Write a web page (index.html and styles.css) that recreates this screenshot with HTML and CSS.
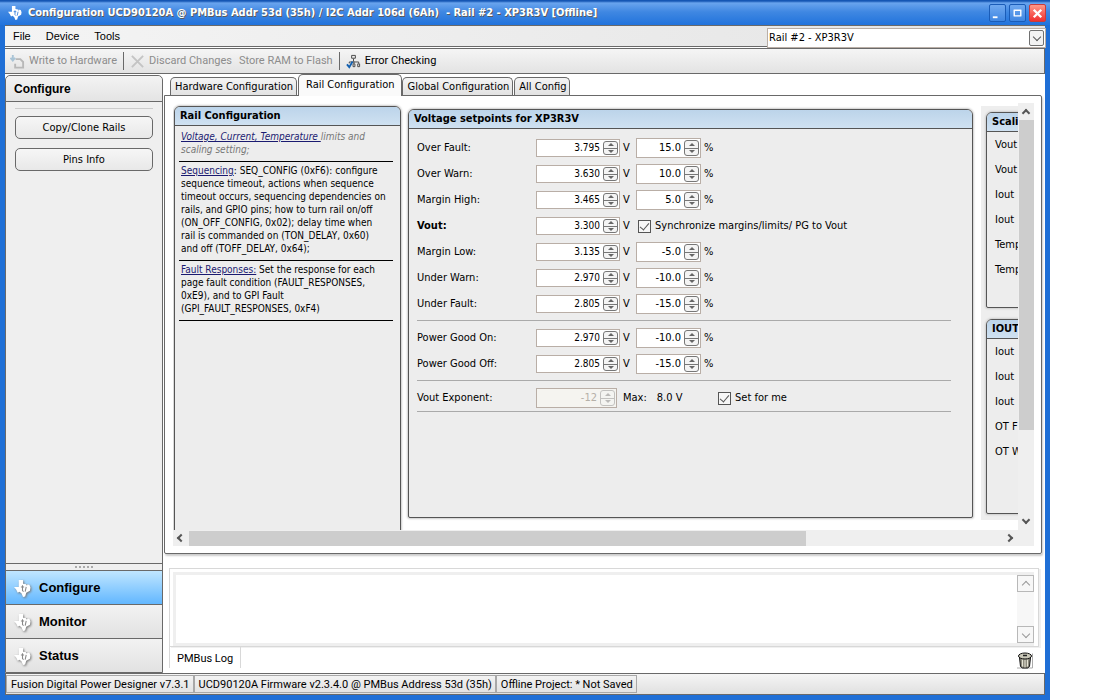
FILE: index.html
```
<!DOCTYPE html>
<html lang="en">
<head>
    <meta charset="UTF-8">
    <meta name="viewport" content="width=device-width, initial-scale=1.0">
    <title>Configuration UCD90120A</title>
    <link rel="stylesheet" href="styles.css">
</head>
<body>
    <svg class="defs" aria-hidden="true">
        <symbol id="ti" viewBox="0 0 16 16">
            <path d="M4.500 0h4v3.500l3 .5 3 .5 1 2.500-.5 3-3.500 2-1 3.500-2 .5-1.500-3.500L5 11l-1.500 1L2 9 0 6.500h4.500z" fill="currentColor"/>
            <path d="M8 5v5l1 1M6.500 6.500h3M11.500 6.500l-1 4.500M12 4v1" fill="none" stroke="var(--mark)"/>
        </symbol>
    </svg>

    <div class="window">
        <header class="titlebar">
            <svg class="logo"><use href="#ti"/></svg>
            <h1>Configuration UCD90120A @ PMBus Addr 53d (35h) / I2C Addr 106d (6Ah) &nbsp;- Rail #2 - XP3R3V [Offline]</h1>
            <button class="win-btn" aria-label="Minimize"><svg viewBox="0 0 16 16"><path d="M3 12h5" stroke="#fff" stroke-width="2"/></svg></button>
            <button class="win-btn" aria-label="Maximize"><svg viewBox="0 0 16 16"><path d="M4 4.500h8M4.500 4v7M11.500 4v7M4 10.500h8" stroke="#fff" stroke-width="1.500"/></svg></button>
            <button class="win-btn close" aria-label="Close"><svg viewBox="0 0 16 16"><path d="M4 4l8 8M12 4l-8 8" stroke="#fff" stroke-width="2.500"/></svg></button>
        </header>

        <nav class="menubar">
            <button>File</button>
            <button>Device</button>
            <button>Tools</button>
            <div class="combo">
                <select aria-label="Rail"><option>Rail #2 - XP3R3V</option></select>
                <span class="combo-arrow"><i class="chev down"></i></span>
            </div>
        </nav>

        <div class="toolbar">
            <button disabled>
                <svg viewBox="0 0 16 16"><path d="M6 5.500h5l3 3v6H5.500v-4" fill="none" stroke="#b8b8b8" stroke-width="2"/><path d="M3 1v5M0.500 4L3 7l2.500-3" fill="none" stroke="#a9c4d6" stroke-width="2"/></svg>
                Write to Hardware
            </button>
            <span class="tool-sep"></span>
            <button disabled>
                <svg viewBox="0 0 16 16"><path d="M2 2l12 12M14 2L2 14" stroke="#c4c4c4" stroke-width="2"/></svg>
                Discard Changes
            </button>
            <button disabled>Store RAM to Flash</button>
            <span class="tool-sep"></span>
            <button>
                <svg viewBox="0 0 16 16"><path d="M6 1.500h4v3H6zM8 5v3M3.500 10V8.500h10V10M8.500 8v2M7.500 10.500h2v3h-2zM12.500 10.500h2v3h-2z" fill="none" stroke="#444"/><path d="M1 11l2.500 3L7 8" fill="none" stroke="#1260b0" stroke-width="2"/></svg>
                Error Checking
            </button>
        </div>

        <div class="workspace">
            <aside class="sidebar">
                <h2>Configure</h2>
                <div class="side-body">
                    <hr>
                    <button class="side-btn">Copy/Clone Rails</button>
                    <button class="side-btn">Pins Info</button>
                </div>
                <div class="grip"><i></i><i></i><i></i><i></i><i></i></div>
                <button class="nav-btn active"><svg><use href="#ti"/></svg>Configure</button>
                <button class="nav-btn"><svg><use href="#ti"/></svg>Monitor</button>
                <button class="nav-btn"><svg><use href="#ti"/></svg>Status</button>
            </aside>

            <main class="content">
                <div class="tabs" role="tablist">
                    <button role="tab">Hardware Configuration</button>
                    <button role="tab" class="active" aria-selected="true">Rail Configuration</button>
                    <button role="tab">Global Configuration</button>
                    <button role="tab">All Config</button>
                </div>

                <div class="tab-page">
                    <div class="viewport">
                        <section class="panel help">
                            <h3>Rail Configuration</h3>
                            <div class="help-body">
                                <p class="note"><a href="#scaling">Voltage, Current, Temperature </a>limits and scaling setting;</p>
                                <p><a href="#sequencing">Sequencing</a>: SEQ_CONFIG (0xF6): configure sequence timeout, actions when sequence timeout occurs, sequencing dependencies on rails, and GPIO pins; how to turn rail on/off (ON_OFF_CONFIG, 0x02); delay time when rail is commanded on (TON_DELAY, 0x60) and off (TOFF_DELAY, 0x64);</p>
                                <p><a href="#faults">Fault Responses:</a> Set the response for each page fault condition (FAULT_RESPONSES, 0xE9), and to GPI Fault (GPI_FAULT_RESPONSES, 0xF4)</p>
                            </div>
                        </section>

                        <section class="panel setpoints">
                            <h3>Voltage setpoints for XP3R3V</h3>
                            <div class="rows">
                                <div class="row">
                                    <label for="ovFault">Over Fault:</label>
                                    <span class="spin"><input id="ovFault" value="3.795"><span class="arrows"><button aria-label="Up"></button><button aria-label="Down"></button></span></span>
                                    <span class="unit">V</span>
                                    <span class="spin pct"><input aria-label="Over Fault %" value="15.0"><span class="arrows"><button aria-label="Up"></button><button aria-label="Down"></button></span></span>
                                    <span>%</span>
                                </div>
                                <div class="row">
                                    <label for="ovWarn">Over Warn:</label>
                                    <span class="spin"><input id="ovWarn" value="3.630"><span class="arrows"><button aria-label="Up"></button><button aria-label="Down"></button></span></span>
                                    <span class="unit">V</span>
                                    <span class="spin pct"><input aria-label="Over Warn %" value="10.0"><span class="arrows"><button aria-label="Up"></button><button aria-label="Down"></button></span></span>
                                    <span>%</span>
                                </div>
                                <div class="row">
                                    <label for="marginHigh">Margin High:</label>
                                    <span class="spin"><input id="marginHigh" value="3.465"><span class="arrows"><button aria-label="Up"></button><button aria-label="Down"></button></span></span>
                                    <span class="unit">V</span>
                                    <span class="spin pct"><input aria-label="Margin High %" value="5.0"><span class="arrows"><button aria-label="Up"></button><button aria-label="Down"></button></span></span>
                                    <span>%</span>
                                </div>
                                <div class="row">
                                    <label for="vout" class="strong">Vout:</label>
                                    <span class="spin"><input id="vout" value="3.300"><span class="arrows"><button aria-label="Up"></button><button aria-label="Down"></button></span></span>
                                    <span class="unit">V</span>
                                    <label class="check"><input type="checkbox" checked>Synchronize margins/limits/ PG to Vout</label>
                                </div>
                                <div class="row">
                                    <label for="marginLow">Margin Low:</label>
                                    <span class="spin"><input id="marginLow" value="3.135"><span class="arrows"><button aria-label="Up"></button><button aria-label="Down"></button></span></span>
                                    <span class="unit">V</span>
                                    <span class="spin pct"><input aria-label="Margin Low %" value="-5.0"><span class="arrows"><button aria-label="Up"></button><button aria-label="Down"></button></span></span>
                                    <span>%</span>
                                </div>
                                <div class="row">
                                    <label for="unWarn">Under Warn:</label>
                                    <span class="spin"><input id="unWarn" value="2.970"><span class="arrows"><button aria-label="Up"></button><button aria-label="Down"></button></span></span>
                                    <span class="unit">V</span>
                                    <span class="spin pct"><input aria-label="Under Warn %" value="-10.0"><span class="arrows"><button aria-label="Up"></button><button aria-label="Down"></button></span></span>
                                    <span>%</span>
                                </div>
                                <div class="row">
                                    <label for="unFault">Under Fault:</label>
                                    <span class="spin"><input id="unFault" value="2.805"><span class="arrows"><button aria-label="Up"></button><button aria-label="Down"></button></span></span>
                                    <span class="unit">V</span>
                                    <span class="spin pct"><input aria-label="Under Fault %" value="-15.0"><span class="arrows"><button aria-label="Up"></button><button aria-label="Down"></button></span></span>
                                    <span>%</span>
                                </div>
                            </div>
                            <div class="rows">
                                <div class="row">
                                    <label for="pgOn">Power Good On:</label>
                                    <span class="spin"><input id="pgOn" value="2.970"><span class="arrows"><button aria-label="Up"></button><button aria-label="Down"></button></span></span>
                                    <span class="unit">V</span>
                                    <span class="spin pct"><input aria-label="Power Good On %" value="-10.0"><span class="arrows"><button aria-label="Up"></button><button aria-label="Down"></button></span></span>
                                    <span>%</span>
                                </div>
                                <div class="row">
                                    <label for="pgOff">Power Good Off:</label>
                                    <span class="spin"><input id="pgOff" value="2.805"><span class="arrows"><button aria-label="Up"></button><button aria-label="Down"></button></span></span>
                                    <span class="unit">V</span>
                                    <span class="spin pct"><input aria-label="Power Good Off %" value="-15.0"><span class="arrows"><button aria-label="Up"></button><button aria-label="Down"></button></span></span>
                                    <span>%</span>
                                </div>
                            </div>
                            <div class="rows last">
                                <div class="row">
                                    <label for="voutExp">Vout Exponent:</label>
                                    <span class="spin exp"><input id="voutExp" value="-12" disabled><span class="arrows"><button aria-label="Up" disabled></button><button aria-label="Down" disabled></button></span></span>
                                    <span class="max"><span>Max:</span><span>8.0 V</span></span>
                                    <label class="check"><input type="checkbox" checked>Set for me</label>
                                </div>
                            </div>
                        </section>

                        <div class="right-col">
                            <section class="panel list">
                                <h3>Scaling</h3>
                                <ul>
                                    <li>Vout</li>
                                    <li>Vout</li>
                                    <li>Iout</li>
                                    <li>Iout</li>
                                    <li>Temp</li>
                                    <li>Temp</li>
                                </ul>
                            </section>
                            <section class="panel list">
                                <h3>IOUT</h3>
                                <ul>
                                    <li>Iout</li>
                                    <li>Iout</li>
                                    <li>Iout</li>
                                    <li>OT F</li>
                                    <li>OT W</li>
                                </ul>
                            </section>
                        </div>
                    </div>
                    <div class="vbar"><i class="chev up"></i><span class="thumb"></span><i class="chev down"></i></div>
                    <div class="hbar"><i class="chev left"></i><span class="thumb"></span><i class="chev right"></i></div>
                </div>

                <div class="log">
                    <div class="log-box">
                        <textarea aria-label="PMBus Log"></textarea>
                        <div class="log-scroll">
                            <button aria-label="Scroll up"><i class="chev up"></i></button>
                            <button aria-label="Scroll down"><i class="chev down"></i></button>
                        </div>
                    </div>
                    <div class="log-foot">
                        <button class="log-tab">PMBus Log</button>
                        <button class="trash" aria-label="Clear log">
                            <svg viewBox="0 0 16 16">
                                <path d="M15.500 1v14.500H0" fill="none" stroke="#aaa"/>
                                <path d="M2.500 5h11l-1 9-2 1.500h-5L3.500 14z" fill="#8d8b7e" stroke="#111"/>
                                <path d="M5.500 7v7M8 7v8M10.500 7v7" stroke="#e6e4d6"/>
                                <ellipse cx="8" cy="3.500" rx="6.500" ry="3" fill="#c9c7b8" stroke="#111"/>
                                <path d="M6 3h4" stroke="#222" stroke-width="1.500"/>
                            </svg>
                        </button>
                    </div>
                </div>
            </main>
        </div>

        <footer class="statusbar">
            <span>Fusion Digital Power Designer v7.3.1</span>
            <span>UCD90120A Firmware v2.3.4.0 @ PMBus Address 53d (35h)</span>
            <span>Offline Project: * Not Saved</span>
        </footer>
    </div>
</body>
</html>
```
FILE: styles.css
```
* {
    box-sizing: border-box;
}

body {
    margin: 0;
    background: #fff;
    font: 11px/14px "DejaVu Sans Condensed", "DejaVu Sans", sans-serif;
    color: #000;
}

button, input, select, textarea {
    font: inherit;
    color: inherit;
    margin: 0;
    padding: 0;
    border: 0;
    background: none;
}

h1, h2, h3, p, ul {
    margin: 0;
    padding: 0;
}

.defs {
    position: absolute;
    width: 0;
    height: 0;
}

.window {
    display: flex;
    flex-direction: column;
    height: 100vh;
    margin-right: 65px;
    border: solid #1f6fd6;
    border-width: 0 5px 5px;
}

/* title bar */
.titlebar {
    display: flex;
    align-items: center;
    gap: 3px;
    height: 25px;
    margin: 0 -5px;
    padding: 1px 4px 0 8px;
    background: linear-gradient(#1556b4 0, #1556b4 1px, #69a4ee 3px, #3f87e2 12px, #2173dc);
    color: #fff;
}

.logo {
    width: 14px;
    height: 14px;
    --mark: #3a80dc;
}

.titlebar h1 {
    flex: 1;
    margin-left: 3px;
    font-size: 11px;
    font-weight: bold;
    text-shadow: 1px 1px #5a5a5a;
    white-space: nowrap;
}

.win-btn {
    width: 17px;
    height: 18px;
    border: 1px solid #1a5cb8;
    border-radius: 2px;
    background: linear-gradient(#70a9f0, #3f86e2);
}

.win-btn svg {
    display: block;
    width: 15px;
    height: 15px;
}

.win-btn.close {
    border-color: #c83c3c;
    background: linear-gradient(#f98, #f03030);
}

/* menu and tool bars */
.menubar {
    display: flex;
    align-items: center;
    gap: 15px;
    height: 22px;
    padding-left: 8px;
    border: 1px solid #696969;
    border-width: 1px 0;
    background: linear-gradient(90deg, #f4f4f4, #e4e4e4);
}

.menubar, .log {
    font-family: "Liberation Sans", Arial, sans-serif;
}

.toolbar, .statusbar, .log-tab {
    font-family: Roboto, "Liberation Sans", sans-serif;
}

.combo {
    display: flex;
    width: 279px;
    height: 20px;
    margin: 3px -1px 0 auto;
    padding: 1px;
    border: 1px solid #b9aea6;
    background: #fff;
    font-family: "DejaVu Sans Condensed", sans-serif;
    z-index: 1;
}

.combo select {
    flex: 1;
    appearance: none;
}

.combo-arrow {
    display: flex;
    align-items: center;
    justify-content: center;
    width: 15px;
    height: 16px;
    border: 1px solid #707070;
    border-radius: 2px;
    background: #f2f2f2;
}

.chev {
    width: 6px;
    height: 6px;
    border: solid #555;
    border-width: 2px 0 0 2px;
    flex: none;
}

.chev.up { transform: translateY(1px) rotate(45deg); }
.chev.down { transform: translateY(-1px) rotate(225deg); }
.chev.left { transform: rotate(-45deg); }
.chev.right { transform: rotate(135deg); }

.combo-arrow .chev, .log-scroll .chev {
    border-width: 1px 0 0 1px;
}

.toolbar {
    display: flex;
    align-items: center;
    gap: 7px;
    height: 26px;
    margin-top: 1px;
    padding-left: 5px;
    border: 1px solid #696969;
    border-left: 0;
    background: linear-gradient(#f5f5f5, #e3e3e3);
}

.toolbar button {
    display: flex;
    align-items: center;
    gap: 4px;
}

.toolbar button:disabled {
    color: #8c8c8c;
}

.toolbar svg {
    width: 15px;
    height: 15px;
}

.tool-sep {
    width: 1px;
    height: 18px;
    margin: 0 -1px;
    background: #696969;
}

.workspace {
    display: flex;
    flex: 1;
    min-height: 0;
}

/* sidebar */
.sidebar {
    display: flex;
    flex-direction: column;
    width: 158px;
    margin-top: 1px;
    border: 1px solid #696969;
    border-radius: 5px 5px 0 0;
    background: #efefef;
}

.sidebar h2 {
    height: 26px;
    padding: 0 8px;
    border-bottom: 1px solid #696969;
    border-radius: 5px 5px 0 0;
    background: linear-gradient(#f3f3f3, #e4e4e4);
    font: bold 12px/26px "Liberation Sans", Arial, sans-serif;
}

.side-body {
    flex: 1;
    padding: 6px 9px;
}

.side-body hr {
    margin: 0 0 7px;
    border: 0;
    border-top: 1px solid #ccc;
}

.side-btn {
    display: block;
    width: 100%;
    height: 23px;
    margin-bottom: 9px;
    border: 1px solid #696969;
    border-radius: 5px;
    background: linear-gradient(#f6f6f6, #e8e8e8);
}

.grip {
    display: flex;
    justify-content: center;
    align-items: center;
    gap: 2px;
    height: 7px;
    border-top: 1px solid #696969;
}

.grip i {
    width: 2px;
    height: 2px;
    background: #aaa;
}

.nav-btn {
    display: flex;
    align-items: center;
    gap: 8px;
    height: 34px;
    padding: 1px 0 0 8px;
    border-top: 1px solid #696969;
    background: linear-gradient(#f2f2f2, #e2e2e2);
    font: bold 13px/16px "Liberation Sans", Arial, sans-serif;
}

.nav-btn.active {
    background: linear-gradient(#c0e6ff, #62b7ff);
}

.nav-btn svg {
    width: 17px;
    height: 17px;
    color: #fff;
    --mark: #888;
    filter: drop-shadow(1px 1px 1px #777);
}

/* tabs */
.content {
    display: flex;
    flex-direction: column;
    flex: 1;
    min-width: 0;
    padding: 0 3px 0 1px;
}

.tabs {
    display: flex;
    align-items: flex-end;
    gap: 1px;
    height: 21px;
    padding-left: 6px;
    z-index: 1;
}

.tabs button {
    height: 18px;
    padding: 0 3px 0 4px;
    border: 1px solid #696969;
    border-bottom: 0;
    border-radius: 5px 5px 0 0;
    background: linear-gradient(#f4f4f4, #e2e2e2);
    white-space: nowrap;
}

.tabs .active {
    height: 22px;
    margin: 0 -1px -1px 0;
    padding: 0 7px 2px;
    background: #fafafa;
}

.tab-page {
    display: grid;
    grid-template-columns: minmax(0, 1fr) 16px;
    grid-template-rows: minmax(0, 1fr) 16px;
    flex: 1;
    min-height: 0;
    padding: 7px 7px 7px 8px;
    border: 1px solid #696969;
    border-radius: 0 2px 2px 2px;
    box-shadow: 1px 2px 2px #ccc;
}

.viewport {
    display: flex;
    align-items: flex-start;
    overflow: hidden;
    padding: 3px 0 0 1px;
}

.panel {
    flex: none;
    overflow: hidden;
    border: 1px solid #555;
    border-radius: 6px 6px 2px 2px;
    background: #ededed;
    box-shadow: 0 0 2px 1px #ccc;
}

.panel h3 {
    height: 19px;
    padding: 0 5px;
    border-bottom: 1px solid #555;
    background: linear-gradient(#bcd4ea, #cfe1f1);
    font-size: 11px;
    line-height: 18px;
    white-space: nowrap;
}

.help {
    width: 227px;
    height: 440px;
}

.help-body {
    padding: 4px 7px 0 4px;
    font-size: 10px;
    line-height: 13px;
}

.help-body p {
    padding: 0 5px 5px 2px;
    border-bottom: 1px solid #000;
    margin-bottom: 2px;
}

.help-body .note {
    color: #777;
    font-style: italic;
}

.help-body a {
    color: #1a1a70;
}

.setpoints {
    width: 565px;
    height: 409px;
    margin: 3px 0 0 7px;
}

.rows {
    margin: 4px 21px 0 8px;
    padding-bottom: 3px;
    border-bottom: 1px solid #aaa;
}

.rows:nth-of-type(1) {
    margin-top: 6px;
}

.rows.last {
    padding-bottom: 0;
}

.row {
    display: flex;
    align-items: center;
    height: 26px;
    gap: 3px;
}

.row > label:first-child {
    width: 116px;
}

.strong {
    font-weight: bold;
}

.unit {
    width: 10px;
}

.spin {
    display: flex;
    width: 84px;
    height: 18px;
    padding: 0 1px;
    border: 1px solid #b9aea6;
    background: #fff;
    font-size: 10px;
}

.spin input {
    flex: 1;
    width: 0;
    padding-right: 3px;
    text-align: right;
}

.spin.pct {
    width: 65px;
    height: 20px;
    font-size: 11px;
}

.spin.exp {
    width: 81px;
    height: 20px;
    font-size: 11px;
    color: #b5b0a8;
    background: #f5f4f0;
}

.arrows {
    display: flex;
    flex-direction: column;
    width: 15px;
    margin: 1px 0;
    border: 1px solid #777;
    border-radius: 3px;
    background: #f4f4f4;
}

.arrows button {
    display: flex;
    flex: 1;
    align-items: center;
    justify-content: center;
}

.arrows button + button {
    border-top: 1px solid #777;
}

.arrows button::before {
    content: "";
    border: solid transparent;
    border-width: 0 3px 3px;
    border-bottom-color: #666;
}

.arrows button + button::before {
    border-width: 3px 3px 0;
    border-top-color: #666;
}

.exp .arrows {
    opacity: 0.4;
}

.check {
    display: flex;
    align-items: center;
    gap: 4px;
    margin-left: 2px;
}

.check input {
    appearance: none;
    display: flex;
    justify-content: center;
    width: 13px;
    height: 13px;
    border: 1px solid #555;
    background: #f6f6f6;
}

.check input:checked::before {
    content: "";
    width: 4px;
    height: 8px;
    border: solid #555;
    border-width: 0 1px 1px 0;
    transform: rotate(40deg);
}

.max {
    display: flex;
    gap: 10px;
    width: 93px;
    padding-left: 3px;
}

.right-col {
    display: flex;
    flex-direction: column;
    flex: none;
    gap: 11px;
    width: 220px;
    height: 414px;
    margin-left: 8px;
    padding: 6px 5px;
    background: #eee;
}

.list {
    flex: 1;
}

.list ul {
    list-style: none;
    padding: 0 8px;
    line-height: 25px;
    white-space: nowrap;
}

/* scroll bars */
.vbar, .hbar {
    display: flex;
    align-items: center;
    background: #efefef;
}

.vbar {
    flex-direction: column;
    padding: 6px 0;
}

.vbar .thumb {
    width: 15px;
    height: 310px;
    margin: 5px 0 auto;
    background: #cdcdcd;
}

.hbar {
    grid-column: 1 / -1;
    padding: 0 22px 0 5px;
}

.hbar .thumb {
    width: 74%;
    height: 15px;
    margin: 0 auto 0 5px;
    background: #cdcdcd;
}

/* log */
.log {
    margin: 14px 3px 0 5px;
}

.log-box {
    display: flex;
    height: 79px;
    padding: 3px 4px 0 3px;
    border: 1px solid #d8d8d8;
    box-shadow: 2px 1px #f0f0f0;
}

.log-box textarea {
    flex: 1;
    resize: none;
    border: 3px solid #efefef;
    border-right: 0;
}

.log-scroll {
    display: flex;
    flex-direction: column;
    justify-content: space-between;
    width: 17px;
    border: solid #efefef;
    border-width: 3px 0;
    background: #f7f7f7;
}

.log-scroll button {
    display: flex;
    align-items: center;
    justify-content: center;
    height: 17px;
    border: 1px solid #b8b8b8;
}

.log-scroll .chev {
    border-color: #999;
}

.log-foot {
    display: flex;
    justify-content: space-between;
    height: 26px;
    padding-right: 6px;
}

.log-tab {
    height: 21px;
    padding: 2px 7px 0;
    border: solid #d8d8d8;
    border-width: 0 1px;
}

.trash svg {
    display: block;
    width: 16px;
    height: 17px;
}

/* status bar */
.statusbar {
    display: flex;
    height: 22px;
    padding: 1px 0;
    border: 1px solid #696969;
    background: linear-gradient(#f5f5f5, #e0e0e0);
}

.statusbar span {
    padding: 0 3px 0 4px;
    border: 1px solid #a8a8a8;
    line-height: 17px;
    white-space: nowrap;
}
```
